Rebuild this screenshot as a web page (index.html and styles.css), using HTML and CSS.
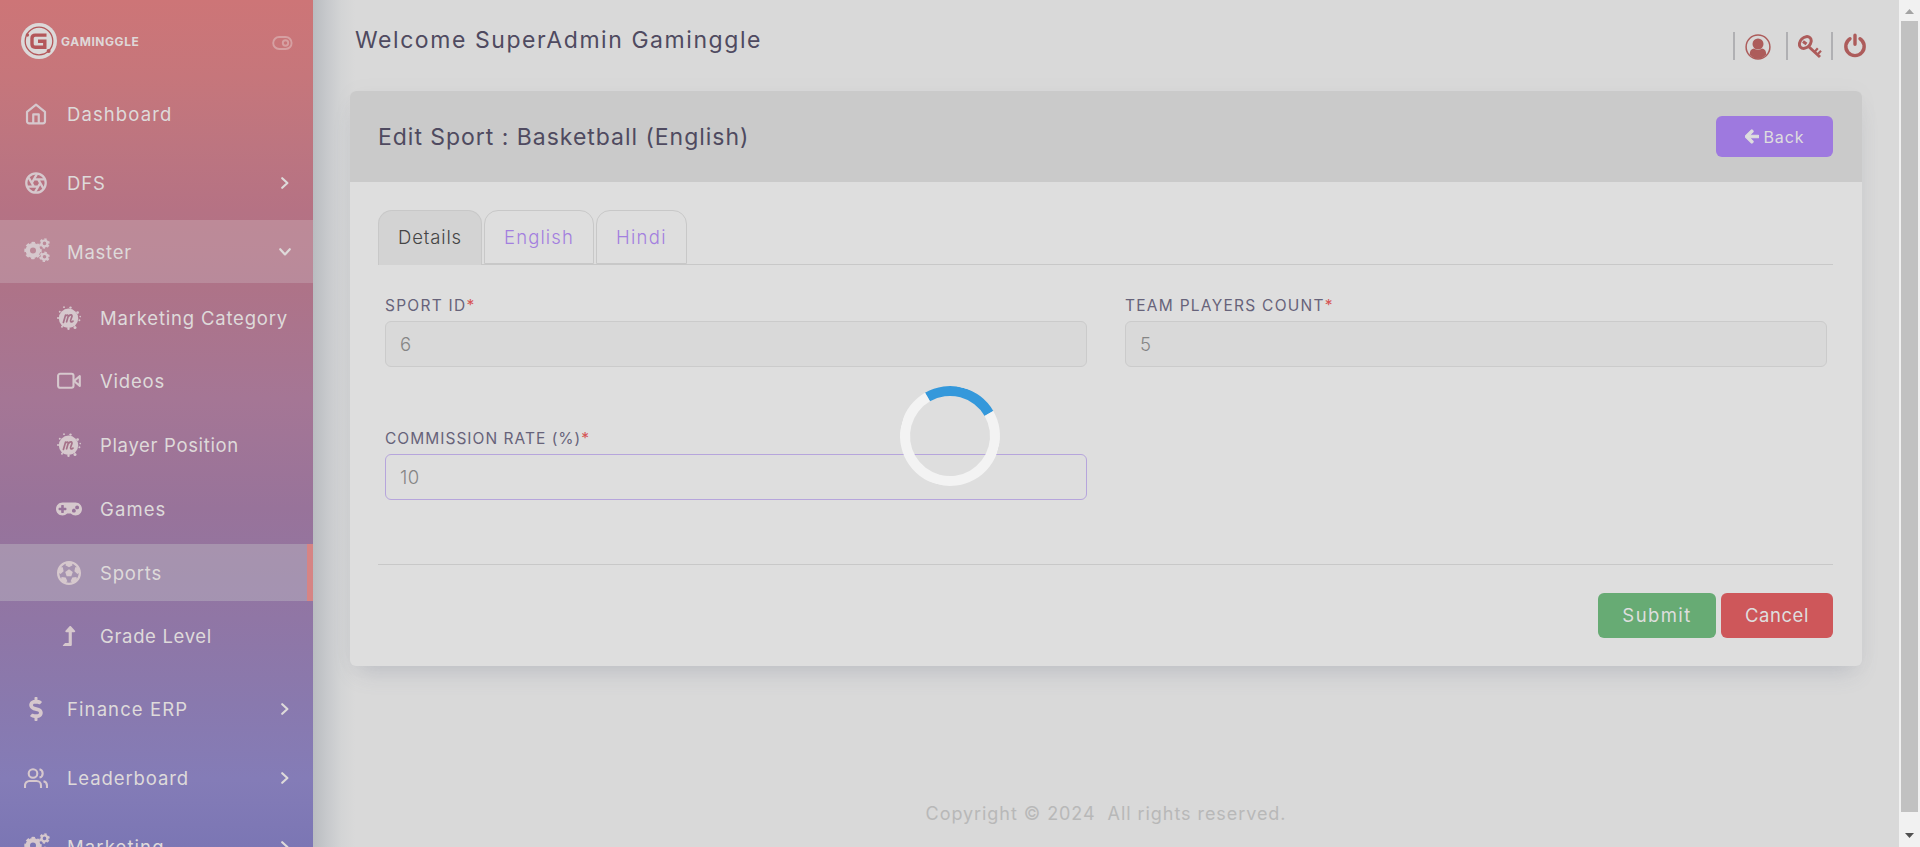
FILE: index.html
```
<!DOCTYPE html>
<html lang="en">
<head>
<meta charset="utf-8">
<title>Edit Sport</title>
<link rel="stylesheet" href="styles.css">
</head>
<body>
<svg width="0" height="0" class="defs">
  <symbol id="cogs" viewBox="0 0 26 24">
    <g fill="none" stroke="currentColor">
      <circle cx="9" cy="12.500" r="5.200" stroke-width="4.400"/>
      <circle cx="9" cy="12.500" r="7.600" stroke-width="2.200" stroke-dasharray="3.400 2.569" stroke-dashoffset="1.700"/>
      <circle cx="20.500" cy="5.400" r="2.900" stroke-width="2.200"/>
      <circle cx="20.500" cy="5.400" r="4.400" stroke-width="1.700" stroke-dasharray="2.400 2.208" stroke-dashoffset="3"/>
      <circle cx="20.500" cy="18.800" r="2.900" stroke-width="2.200"/>
      <circle cx="20.500" cy="18.800" r="4.400" stroke-width="1.700" stroke-dasharray="2.400 2.208" stroke-dashoffset="3"/>
    </g>
  </symbol>
  <symbol id="splat" viewBox="0 0 24 24">
    <circle cx="11.500" cy="12.300" r="9.700" fill="currentColor"/>
    <g fill="currentColor"><circle cx="7" cy="1.200" r=".9"/><circle cx="13.500" cy="1.600" r="1.200"/><circle cx="20.600" cy="6.600" r="1.400"/><circle cx="23.200" cy="10.600" r=".8"/><circle cx="22.400" cy="14.200" r="1"/><circle cx="18" cy="21.400" r="1.500"/><circle cx="11.500" cy="22.800" r="1.200"/><circle cx="5" cy="20.800" r="1"/><circle cx="1" cy="12" r="1"/><circle cx="2.800" cy="5.800" r="1"/></g>
    <path d="M6.400 16.400 8.600 9M8.200 10.600c1.600-2.400 3.600-2 2.800.4l-1.400 4.800m1.600-5c1.800-2.800 4.600-2.400 3.600.2-.6 1.800-1.800 3.800-1 4.600.6.6 1.600.2 2.200-.4" fill="none" class="splat-m" stroke-width="1.700" stroke-linecap="round"/>
  </symbol>
  <symbol id="chev" viewBox="0 0 12 16"><path d="M3.200 3.200 8.400 8 3.200 12.800" fill="none" stroke="currentColor" stroke-width="2.200" stroke-linecap="round" stroke-linejoin="round"/></symbol>
</svg>

<aside class="sidebar">
  <div class="brand">
    <svg class="brand-mark" viewBox="0 0 36 36">
      <circle cx="18" cy="18" r="18" fill="#dcd9d9"/>
      <circle cx="18" cy="18" r="13.800" fill="none" stroke="#b4575a" stroke-width="1.300"/>
      <circle cx="6.400" cy="12" r="1.700" fill="#b4575a"/><circle cx="27.600" cy="28" r="2" fill="#b4575a"/>
      <path d="M25.500 12.100H14.200q-3.200 0-3.200 3.200v5.800q0 3.200 3.200 3.200h9.600v-6h-6.800" fill="none" stroke="#b4575a" stroke-width="3.400"/>
    </svg>
    <span class="brand-name">GAMINGGLE</span>
    <svg class="toggle" viewBox="0 0 22 14" fill="none" stroke="currentColor" stroke-width="1.900"><rect x="1.200" y="1" width="18.400" height="12" rx="6"/><circle cx="13.500" cy="7" r="2.700"/></svg>
  </div>

  <nav class="menu">
    <a class="item"><svg class="ic" viewBox="0 0 24 24" fill="none" stroke="currentColor" stroke-width="2.400" stroke-linejoin="round"><path d="M2.200 9.600 12 1.800l9.800 7.800V20a2.200 2.200 0 0 1-2.200 2.200H4.400A2.200 2.200 0 0 1 2.200 20z"/><path d="M9 22V12.500h6V22"/></svg><span class="k135">Dashboard</span></a>
    <a class="item"><svg class="ic" viewBox="0 0 24 24" fill="none" stroke="currentColor" stroke-width="2.500"><circle cx="12" cy="12" r="10.600"/><path d="m14.300 8 5.700 9.900M9.700 8h11.500M7.400 12l5.700-9.900M9.700 16 4 6.100M14.300 16H2.800M16.600 12l-5.700 9.900"/></svg><span class="k128">DFS</span><svg class="chev"><use href="#chev"/></svg></a>
    <a class="item open"><svg class="ic cogs"><use href="#cogs"/></svg><span class="k102">Master</span><svg class="chev down"><use href="#chev"/></svg></a>
    <div class="submenu">
      <a class="sub"><svg class="ic splat"><use href="#splat"/></svg><span class="k106">Marketing Category</span></a>
      <a class="sub"><svg class="ic" viewBox="0 0 24 24" fill="none" stroke="currentColor" stroke-width="2.100" stroke-linejoin="round"><rect x="1.100" y="4.800" width="15.400" height="14" rx="2"/><path d="m17 12 5.800-4.900v9.800z"/></svg><span class="k106">Videos</span></a>
      <a class="sub"><svg class="ic splat"><use href="#splat"/></svg><span class="k090">Player Position</span></a>
      <a class="sub"><svg class="ic pad" viewBox="0 0 640 512"><path fill="currentColor" fill-rule="evenodd" d="M480 96H160C71.600 96 0 167.600 0 256s71.600 160 160 160c44.800 0 85.200-18.400 114.200-48h91.500c29 29.600 69.500 48 114.200 48 88.400 0 160-71.600 160-160S568.400 96 480 96zM256 276c0 6.600-5.400 12-12 12h-52v52c0 6.600-5.400 12-12 12h-40c-6.600 0-12-5.400-12-12v-52H76c-6.600 0-12-5.400-12-12v-40c0-6.600 5.400-12 12-12h52v-52c0-6.600 5.400-12 12-12h40c6.600 0 12 5.400 12 12v52h52c6.600 0 12 5.400 12 12v40zm184 68c-26.500 0-48-21.500-48-48s21.500-48 48-48 48 21.500 48 48-21.500 48-48 48zm80-80c-26.500 0-48-21.500-48-48s21.500-48 48-48 48 21.500 48 48-21.500 48-48 48z"/></svg><span class="k135">Games</span></a>
      <a class="sub current"><svg class="ic" viewBox="8 8 496 496"><path fill="currentColor" d="M504 256c0 136.967-111.033 248-248 248S8 392.967 8 256 119.033 8 256 8s248 111.033 248 248zm-48 0l-.003-.282-26.064 22.741-62.679-58.500 16.454-84.355 34.303 3.072c-24.889-34.216-60.004-60.089-100.709-73.141l13.651 31.939L256 139l-74.953-41.525 13.651-31.939c-40.631 13.028-75.780 38.870-100.709 73.141l34.565-3.073 16.192 84.355-62.678 58.500-26.064-22.741-.003.282c0 43.015 13.497 83.952 38.472 117.991l7.704-33.897 85.138 10.447 36.301 77.826-29.902 17.786c40.202 13.122 84.290 13.148 124.572 0l-29.902-17.786 36.301-77.826 85.138-10.447 7.704 33.897C442.503 339.952 456 299.015 456 256zm-248.102 69.571l-29.894-91.312L256 177.732l77.996 56.527-29.622 91.312h-96.476z"/></svg><span class="k106">Sports</span></a>
      <a class="sub"><svg class="ic level" viewBox="0 0 320 512"><path fill="currentColor" d="M313.553 119.669L209.587 7.666c-9.485-10.214-25.676-10.229-35.174 0L70.438 119.669C56.232 134.969 67.062 160 88.025 160H152v272H68.024a11.996 11.996 0 0 0-8.485 3.515l-56 56C-4.021 499.074 1.333 512 12.024 512H208c13.255 0 24-10.745 24-24V160h63.966c20.878 0 31.851-24.969 17.587-40.331z"/></svg><span class="k090">Grade Level</span></a>
    </div>
    <a class="item"><svg class="ic dollar" viewBox="0 0 288 512"><path fill="currentColor" d="M209.200 233.400l-108-31.600C88.700 198.200 80 186.500 80 173.500c0-16.300 13.200-29.500 29.500-29.500h66.300c12.200 0 24.200 3.700 34.200 10.500 6.100 4.100 14.300 3.100 19.500-2l34.800-34c7.100-6.900 6.100-18.400-1.800-24.500C238 74.800 207.400 64.100 176 64V16c0-8.800-7.200-16-16-16h-32c-8.800 0-16 7.200-16 16v48h-2.500C45.800 64-5.400 118.700.5 183.600c4.200 46.100 39.400 83.600 83.800 96.600l102.500 30c12.500 3.700 21.200 15.300 21.200 28.300 0 16.300-13.200 29.500-29.500 29.500h-66.300C100 368 88 364.300 78 357.500c-6.100-4.100-14.300-3.100-19.500 2l-34.800 34c-7.100 6.900-6.100 18.400 1.800 24.500 24.500 19.200 55.100 29.900 86.500 30v48c0 8.800 7.200 16 16 16h32c8.800 0 16-7.200 16-16v-48.200c46.600-.9 90.300-28.600 105.700-72.700 21.500-61.600-14.600-124.800-72.500-141.700z"/></svg><span class="k135">Finance ERP</span><svg class="chev"><use href="#chev"/></svg></a>
    <a class="item"><svg class="ic people" viewBox="0 0 24 24" fill="none" stroke="currentColor" stroke-width="2.100"><path d="M17 22v-2.500a4.500 4.500 0 0 0-4.500-4.500h-7A4.500 4.500 0 0 0 1 19.500V22"/><circle cx="9" cy="7.500" r="4.300"/><path d="M23 22v-2.500a4.500 4.500 0 0 0-3.500-4.300M15.500 3.300a4.300 4.300 0 0 1 0 8.300"/></svg><span class="k117">Leaderboard</span><svg class="chev"><use href="#chev"/></svg></a>
    <a class="item"><svg class="ic cogs"><use href="#cogs"/></svg><span class="k135">Marketing</span><svg class="chev"><use href="#chev"/></svg></a>
  </nav>
</aside>

<div class="page">
  <header class="topbar">
    <h1 class="welcome">Welcome SuperAdmin Gaminggle</h1>
    <div class="actions">
      <span class="act"><svg width="26" height="26" viewBox="0 0 26 26"><circle cx="13" cy="13" r="11.900" fill="none" stroke="currentColor" stroke-width="1.500"/><circle cx="13" cy="10" r="5.500" fill="currentColor"/><path d="M4.800 20.500c0-4 2-5.700 4.200-5.900 2.400 1.700 5.600 1.700 8 0 2.200.2 4.200 1.900 4.200 5.900-4.200 5.700-12.200 5.700-16.400 0z" fill="currentColor"/></svg></span>
      <span class="act key"><svg width="24" height="24" viewBox="0 0 24 24" fill="none" stroke="currentColor"><ellipse cx="7.300" cy="7.500" rx="6.700" ry="5" transform="rotate(-45 7.300 7.500)" stroke-width="3"/><path d="m5 6.500 3.500 2.500M10.500 11.500 22 22" stroke-width="3"/><path d="m16.500 17 3.300-3.800M19.700 19.300l3.300-3.500" stroke-width="2.200"/></svg></span>
      <span class="act power"><svg width="24" height="26" viewBox="0 0 24 26" fill="none" stroke="currentColor" stroke-width="3.400" stroke-linecap="round"><path d="M12 2.300v9M7 5.700a9.200 9.200 0 1 0 10 0"/></svg></span>
    </div>
  </header>

  <main class="card">
    <div class="card-head">
      <h2 class="card-title">Edit Sport : Basketball (English)</h2>
      <a class="btn back"><svg width="14" height="15" viewBox="-8 20 464 472"><path fill="currentColor" stroke="currentColor" stroke-width="36" stroke-linejoin="round" d="M257.500 445.100l-22.200 22.200c-9.400 9.400-24.600 9.400-33.900 0L7 273c-9.400-9.400-9.400-24.600 0-33.900L201.400 44.700c9.400-9.400 24.600-9.400 33.900 0l22.200 22.200c9.500 9.500 9.300 25-.4 34.300L136.600 216H424c13.300 0 24 10.700 24 24v32c0 13.300-10.700 24-24 24H136.600l120.500 114.800c9.800 9.300 10 24.800.4 34.300z"/></svg><span>Back</span></a>
    </div>
    <div class="card-body">
      <div class="tabs"><a class="tab on">Details</a><a class="tab english">English</a><a class="tab hindi">Hindi</a></div>
      <div class="fields">
        <div class="field"><label>SPORT ID<i>*</i></label><div class="input off">6</div></div>
        <div class="field"><label>TEAM PLAYERS COUNT<i>*</i></label><div class="input off">5</div></div>
        <div class="field"><label class="rate">COMMISSION RATE (%)<i>*</i></label><div class="input">10</div></div>
      </div>
      <div class="form-foot"><a class="btn submit">Submit</a><a class="btn cancel">Cancel</a></div>
    </div>
  </main>

  <footer class="footer">Copyright © 2024&nbsp; All rights reserved.</footer>
</div>

<div class="scrollbar">
  <svg width="21" height="21" viewBox="0 0 21 21"><path d="M6 14h9l-4.500-5z" fill="#a3a3a3"/></svg>
  <div class="thumb"></div>
  <svg width="21" height="21" viewBox="0 0 21 21"><path d="M6 7h9l-4.500 5z" fill="#505050"/></svg>
</div>
<div class="spinner"></div>
</body>
</html>
```
FILE: styles.css
```
* { box-sizing: border-box; }
body {
  margin: 0;
  height: 847px;
  overflow: hidden;
  display: flex;
  background: #d9d9d9;
  font-family: Inter, "Open Sans", sans-serif;
  font-size: 18px;
}
.defs { position: absolute; }
h1, h2 { margin: 0; font-weight: 400; }

/* Sidebar */
.sidebar {
  width: 313px;
  height: 847px;
  flex: none;
  overflow: hidden;
  color: #dbd3d6;
  background: linear-gradient(180deg, #cd7577 0%, #c6767b 9%, #bd7580 17%, #b57284 25%, #ae7388 34%, #a57695 47%, #98739a 60%, #9076a5 73%, #8979ae 83%, #847cb7 92%, #7b76b4 100%);
}
.brand {
  height: 82px;
  padding: 0 19px 0 21px;
  display: flex;
  align-items: center;
}
.brand-mark { width: 36px; height: 36px; }
.brand-name { margin-left: 4px; font-size: 12px; font-weight: 700; letter-spacing: .55px; color: #dfd8d8; }
.toggle { width: 22px; height: 14px; margin: 3px 0 0 auto; color: #d6a0a2; }
.item {
  height: 63px;
  margin-bottom: 6px;
  padding: 0 22px 0 24px;
  display: flex;
  align-items: center;
}
.item span, .sub span { font-size: 18.5px; color: #dedada; white-space: nowrap; }
.ic { width: 24px; height: 24px; flex: none; color: #d6c8cd; }
.item .ic { width: 22px; height: 22px; margin-right: 20px; margin-left: 1px; }
.item .ic.cogs { width: 26px; height: 24px; margin-right: 17px; margin-left: 0; margin-bottom: 4px; }
.item .ic.dollar { width: 14px; height: 24px; margin-left: 5px; margin-right: 24px; }
.item .ic.people { width: 24px; height: 24px; margin-left: 0; margin-right: 19px; }
.chev { width: 12px; height: 16px; margin-left: auto; color: #dedada; }
.down { transform: rotate(90deg); }
.open { background: rgba(222, 222, 222, .22); }
.submenu { display: grid; grid-auto-rows: 57px; row-gap: 6.8px; padding-bottom: 12.500px; }
.sub { padding-left: 57px; display: flex; align-items: center; }
.sub .ic { margin-right: 19px; }
.sub .ic.pad { width: 26px; height: 22px; margin-left: -1px; margin-right: 18px; }
.sub .ic.level { width: 14px; height: 20px; margin: 0 24px 0 5px; }
.splat-m { stroke: #a67289; }
.current { background: rgba(210, 218, 212, .3); border-right: 6px solid #d68484; }
.k135 { letter-spacing: 1.1px; }
.k128 { letter-spacing: .9px; }
.k117 { letter-spacing: .9px; }
.k106 { letter-spacing: .8px; }
.k102 { letter-spacing: .75px; }
.k090 { letter-spacing: .66px; }

/* Page */
.page {
  width: 1586px;
  flex: none;
  padding: 0 37px;
  display: flex;
  flex-direction: column;
  background: linear-gradient(90deg, #b9bcc0 0, #c7c9cc 14px, #d3d4d5 28px, #d9d9d9 42px);
}
.topbar { height: 91px; padding: 0 0 0 5px; display: flex; justify-content: space-between; }
.welcome { margin-top: 26px; line-height: 28px; font-size: 23px; letter-spacing: 1.56px; color: #4f4a60; white-space: nowrap; }
.actions { display: flex; margin-top: 32px; margin-right: -5px; color: #ad5c5b; }
.act { height: 28px; border-left: 2px solid #b0b0b3; padding: 2px 15px 0 10px; }
.act.key { padding: 3px 9px 0 10px; }
.act.power { padding: 1px 0 0 10px; }
.card {
  height: 575px;
  border-radius: 6px;
  background: #dedede;
  box-shadow: 0 13px 22px -8px rgba(100, 110, 135, .24), 0 0 20px rgba(120, 125, 135, .04);
}
.card-head {
  height: 91px;
  padding: 0 29px 0 28px;
  display: flex;
  align-items: center;
  justify-content: space-between;
  background: #cacaca;
  border-radius: 6px 6px 0 0;
}
.card-title { font-size: 23px; letter-spacing: .97px; color: #4f4a60; white-space: nowrap; }
.btn { border-radius: 6px; color: #dedede; display: flex; align-items: center; justify-content: center; }
.back { width: 117px; height: 41px; background: #9e79df; font-size: 16px; letter-spacing: .9px; gap: 5px; }
.card-body { padding: 28px 29px 0 28px; }
.tabs { height: 55px; border-bottom: 1px solid #c8c8c8; display: flex; gap: 2px; }
.tab {
  width: 110px;
  height: 54px;
  border: 1px solid #c8c8c8;
  border-radius: 14px 14px 0 0;
  font-size: 18.5px;
  font-weight: 300;
  line-height: 52px;
  padding-left: 19px;
  color: #a37fdf;
  letter-spacing: 1.12px;
}
.on { width: 104px; height: 55px; border-bottom: 0; background: #d3d3d3; color: #454545; letter-spacing: .85px; }
.hindi { width: 91px; letter-spacing: 1.3px; }
.fields {
  margin-top: 30px;
  padding: 0 7px;
  display: grid;
  grid-template-columns: 702px 702px;
  column-gap: 38px;
  row-gap: 61px;
}
.field label { display: block; height: 26px; line-height: 21px; font-size: 15.5px; letter-spacing: 1.26px; color: #67637a; white-space: nowrap; }
.field .rate { letter-spacing: 1.02px; }
.field i { font-style: normal; color: #d65353; }
.input {
  height: 46px;
  border: 1px solid #b6a5dc;
  border-radius: 6px;
  padding-left: 14px;
  line-height: 45px;
  font-size: 18.5px;
  font-weight: 300;
  letter-spacing: .5px;
  color: #858585;
}
.off { background: #d9d9d9; border-color: #cbcbcb; }
.form-foot { margin-top: 64px; padding-top: 28px; border-top: 1px solid #c8c8c8; display: flex; justify-content: flex-end; gap: 5px; }
.form-foot .btn { height: 45px; padding-bottom: 2px; font-size: 18.5px; }
.submit { width: 118px; background: #67ab74; letter-spacing: 1.4px; }
.cancel { width: 112px; background: #ce575a; letter-spacing: .55px; }
.footer { margin-top: 134px; line-height: 28px; text-align: center; letter-spacing: .94px; color: #b8b8b8; }

/* Window scrollbar */
.scrollbar { width: 21px; height: 847px; display: flex; flex-direction: column; background: #f1f1f1; }
.scrollbar svg { flex: none; }
.thumb { width: 17px; height: 791px; margin: 0 0 14px 2px; background: #c1c1c1; }

/* Loading indicator */
.spinner {
  position: absolute;
  left: 900px;
  top: 386px;
  width: 100px;
  height: 100px;
  border: 10px solid #f3f3f3;
  border-top-color: #3498db;
  border-radius: 50%;
  transform: rotate(15deg);
}
```
